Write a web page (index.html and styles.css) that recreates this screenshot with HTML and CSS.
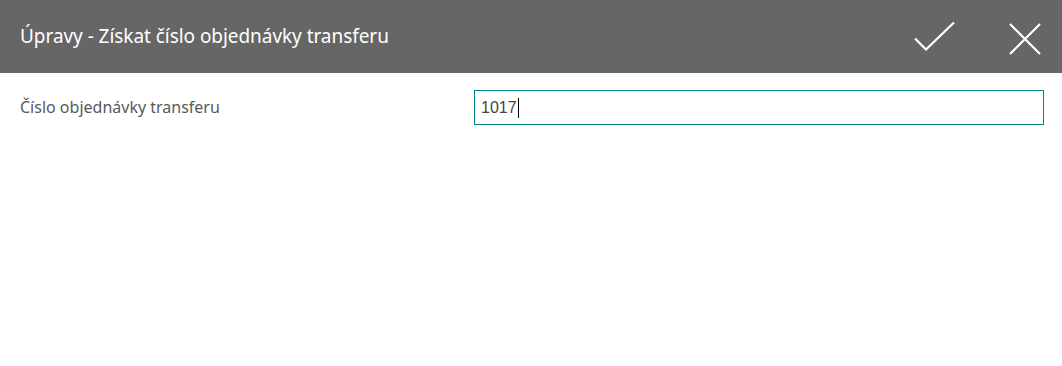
FILE: index.html
```html
<!DOCTYPE html>
<html lang="cs">
<head>
<meta charset="utf-8">
<title>Úpravy</title>
<link rel="stylesheet" href="styles.css">
</head>
<body>
<div class="dialog">
  <header class="bar">
    <h1 class="title">Úpravy - Získat číslo objednávky transferu</h1>
    <div class="actions">
      <button class="icon-btn ok" aria-label="OK">
        <svg width="42" height="32" viewBox="0 0 42 32"><path d="M1 16.5 L12 27.5 L40 0.5" fill="none" stroke="#fff" stroke-width="2.2"/></svg>
      </button>
      <button class="icon-btn close" aria-label="Zavřít">
        <svg width="32" height="32" viewBox="0 0 32 32"><path d="M1 1 L31 31 M31 1 L1 31" fill="none" stroke="#fff" stroke-width="2.2"/></svg>
      </button>
    </div>
  </header>
  <div class="content">
    <div class="field">
      <label class="label" for="num">Číslo objednávky transferu</label>
      <div class="input"><span class="value">1017</span><span class="caret"></span></div>
    </div>
  </div>
</div>
</body>
</html>
```
FILE: styles.css
```css
* { box-sizing: border-box; }
html, body { margin: 0; padding: 0; background: #fff; }
body { font-family: "Noto Sans", "Open Sans", sans-serif; width: 1062px; height: 366px; overflow: hidden; }
.bar {
  height: 73px;
  background: #666666;
  display: flex;
  align-items: center;
  justify-content: space-between;
  padding: 0 20px;
}
.title {
  margin: 0;
  color: #fff;
  font-weight: 400;
  font-size: 19px;
  letter-spacing: -0.05px;
  padding-bottom: 2px;
}
.actions { display: flex; align-items: center; gap: 0; margin-right: 1px; }
.icon-btn {
  background: none;
  border: 0;
  padding: 0;
  display: flex;
  align-items: center;
  justify-content: center;
  cursor: pointer;
}
.icon-btn.ok { width: 42px; height: 32px; margin-right: 53px; margin-top: 2px; }
.icon-btn.close { width: 32px; height: 32px; margin-top: 4px; }
.content { padding: 17px 18px 0 20px; }
.field { display: flex; align-items: center; }
.label {
  width: 454px;
  color: #595959;
  font-size: 16px;
  padding-bottom: 2px;
}
.input {
  flex: 1;
  height: 35px;
  border: 1px solid #038387;
  display: flex;
  align-items: center;
  padding-left: 6px;
}
.value {
  font-family: "Liberation Sans", Arial, sans-serif;
  font-size: 16px;
  color: #444;
}
.caret { width: 1px; height: 20px; background: #000; margin-left: 1px; }
```
